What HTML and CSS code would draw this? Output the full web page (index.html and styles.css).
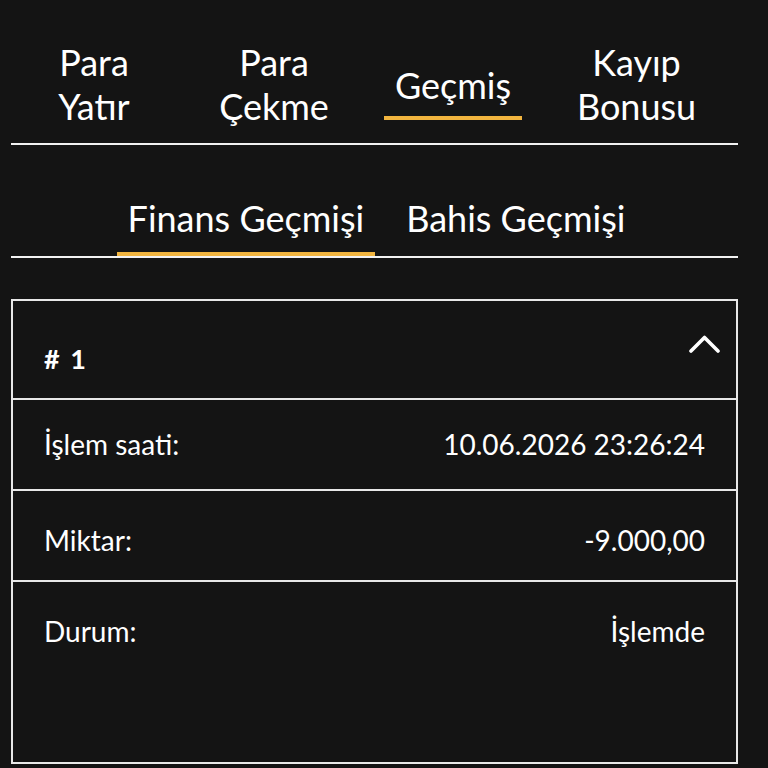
FILE: index.html
```html
<!DOCTYPE html>
<html lang="tr">
<head>
<meta charset="utf-8">
<link rel="stylesheet" href="styles.css">
</head>
<body>
<div class="page">
  <nav class="main-tabs">
    <div class="main-tab t1"><span class="label">Para<br>Yatır</span></div>
    <div class="main-tab t2"><span class="label">Para<br>Çekme</span></div>
    <div class="main-tab t3"><span class="label active">Geçmiş</span></div>
    <div class="main-tab t4"><span class="label">Kayıp<br>Bonusu</span></div>
  </nav>
  <nav class="sub-tabs">
    <span class="sub-tab active">Finans Geçmişi</span>
    <span class="sub-tab">Bahis Geçmişi</span>
  </nav>
  <section class="card">
    <div class="card-head">
      <span class="card-title"># 1</span>
      <svg class="chevron" width="31" height="18" viewBox="0 0 31 18"><polyline points="2,16 15.5,2.5 29,16" fill="none" stroke="#fff" stroke-width="3.6" stroke-linecap="round" stroke-linejoin="round"/></svg>
    </div>
    <div class="row first"><span>İşlem saati:</span><span>10.06.2026 23:26:24</span></div>
    <div class="row"><span>Miktar:</span><span>-9.000,00</span></div>
    <div class="row tall"><span>Durum:</span><span>İşlemde</span></div>
  </section>
</div>
</body>
</html>
```
FILE: styles.css
```css
html, body {
  margin: 0;
  padding: 0;
  background: #141414;
  color: #fff;
  font-family: Lato, "Noto Sans", sans-serif;
}
.page {
  width: 727px;
  margin-left: 11px;
}
.main-tabs {
  display: grid;
  grid-template-columns: 166px 194px 164px 203px;
  padding-top: 40px;
  height: 103px;
  border-bottom: 2px solid #f2f2f2;
}
.main-tab {
  display: flex;
  justify-content: center;
  align-items: flex-start;
  text-align: center;
  font-size: 36px;
  line-height: 44px;
}
.main-tab .label.active {
  margin-top: 23px;
  padding: 0 11px 9px;
  border-bottom: 4px solid #f2b53f;
}
.sub-tabs {
  display: flex;
  justify-content: center;
  gap: 20px;
  padding-top: 51px;
  border-bottom: 2px solid #f2f2f2;
  padding-left: 4px;
}
.sub-tab {
  font-size: 36px;
  line-height: 44px;
  padding: 0 11px 12px;
  border-bottom: 4px solid transparent;
}
.sub-tab.active {
  border-bottom-color: #f2b53f;
}
.card {
  margin-top: 41px;
  border: 2px solid #e8e8e8;
  border-bottom: none;
}
.card-head {
  height: 99px;
  display: flex;
  justify-content: space-between;
  align-items: flex-start;
  padding: 0 16px 0 31px;
  border-bottom: 2px solid #e8e8e8;
  box-sizing: border-box;
}
.card-title {
  font-weight: 700;
  font-size: 27px;
  line-height: 30px;
  margin-top: 43px;
  word-spacing: 4px;
}
.chevron {
  margin-top: 34px;
}
.row {
  height: 91px;
  box-sizing: border-box;
  padding: 34px 31px 0 31px;
  display: flex;
  justify-content: space-between;
  align-items: flex-start;
  font-size: 28px;
  line-height: 30px;
  border-bottom: 2px solid #e8e8e8;
}
.row.first {
  padding-top: 29px;
}
.row.tall {
  height: 182px;
}
```
